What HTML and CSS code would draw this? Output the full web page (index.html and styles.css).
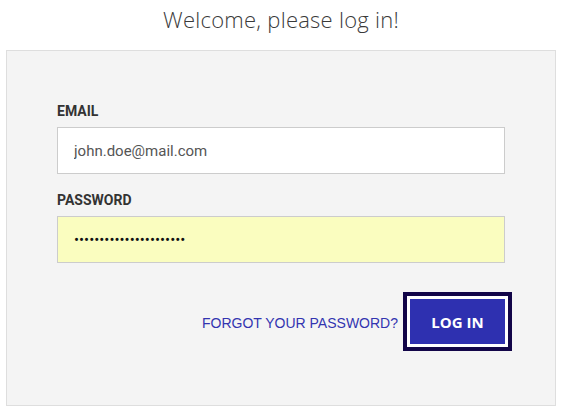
FILE: index.html
```html
<!DOCTYPE html>
<html>
<head>
<meta charset="utf-8">
<link rel="stylesheet" href="styles.css">
</head>
<body>
<h1 class="title">Welcome, please log in!</h1>
<form class="card">
  <label class="label" for="email">EMAIL</label>
  <input class="field" id="email" type="text" value="john.doe@mail.com">
  <label class="label label-pw" for="pw">PASSWORD</label>
  <input class="field field-pw" id="pw" type="password" value="abcdefghijklmnopqrstuv">
  <div class="actions">
    <a class="forgot" href="#">FORGOT YOUR PASSWORD?</a>
    <button class="btn" type="button">LOG IN</button>
  </div>
</form>
</body>
</html>
```
FILE: styles.css
```css
html, body {
  margin: 0;
  padding: 0;
  background: #ffffff;
}
body {
  padding: 0 6px;
  font-family: Roboto, "Liberation Sans", sans-serif;
}
.title {
  margin: 0;
  height: 50px;
  padding-top: 5px;
  box-sizing: border-box;
  text-align: center;
  font-family: "Open Sans", sans-serif;
  font-weight: 300;
  font-size: 22px;
  letter-spacing: 0.25px;
  line-height: 28px;
  color: #3a3a3a;
}
.card {
  display: flex;
  flex-direction: column;
  height: 356px;
  box-sizing: border-box;
  border: 1px solid #dedede;
  background: #f4f4f4;
  padding: 52px 50px 0 50px;
}
.label {
  display: block;
  font-weight: 700;
  font-size: 14px;
  line-height: 17px;
  color: #333333;
  margin-bottom: 7px;
}
.label-pw {
  margin-top: 18px;
}
.field {
  display: block;
  width: 100%;
  height: 47px;
  box-sizing: border-box;
  border: 1px solid #cccccc;
  background: #ffffff;
  padding: 0 16px;
  font-family: Roboto, sans-serif;
  font-size: 15px;
  color: #555555;
  outline: none;
}
.field-pw {
  background: #fafdbf;
  color: #111111;
}
.actions {
  display: flex;
  justify-content: flex-end;
  align-items: center;
  gap: 12px;
  margin-top: 36px;
}
.forgot {
  font-family: "Liberation Sans", Arial, sans-serif;
  font-size: 14px;
  color: #3334b0;
  text-decoration: none;
  padding-top: 2px;
}
.btn {
  width: 95px;
  height: 45px;
  border: none;
  background: #2e30b0;
  color: #ffffff;
  font-family: "Open Sans", sans-serif;
  font-weight: 700;
  font-size: 15px;
  box-shadow: 0 0 0 3px #ffffff, 0 0 0 7px #120548;
  cursor: pointer;
}
```
